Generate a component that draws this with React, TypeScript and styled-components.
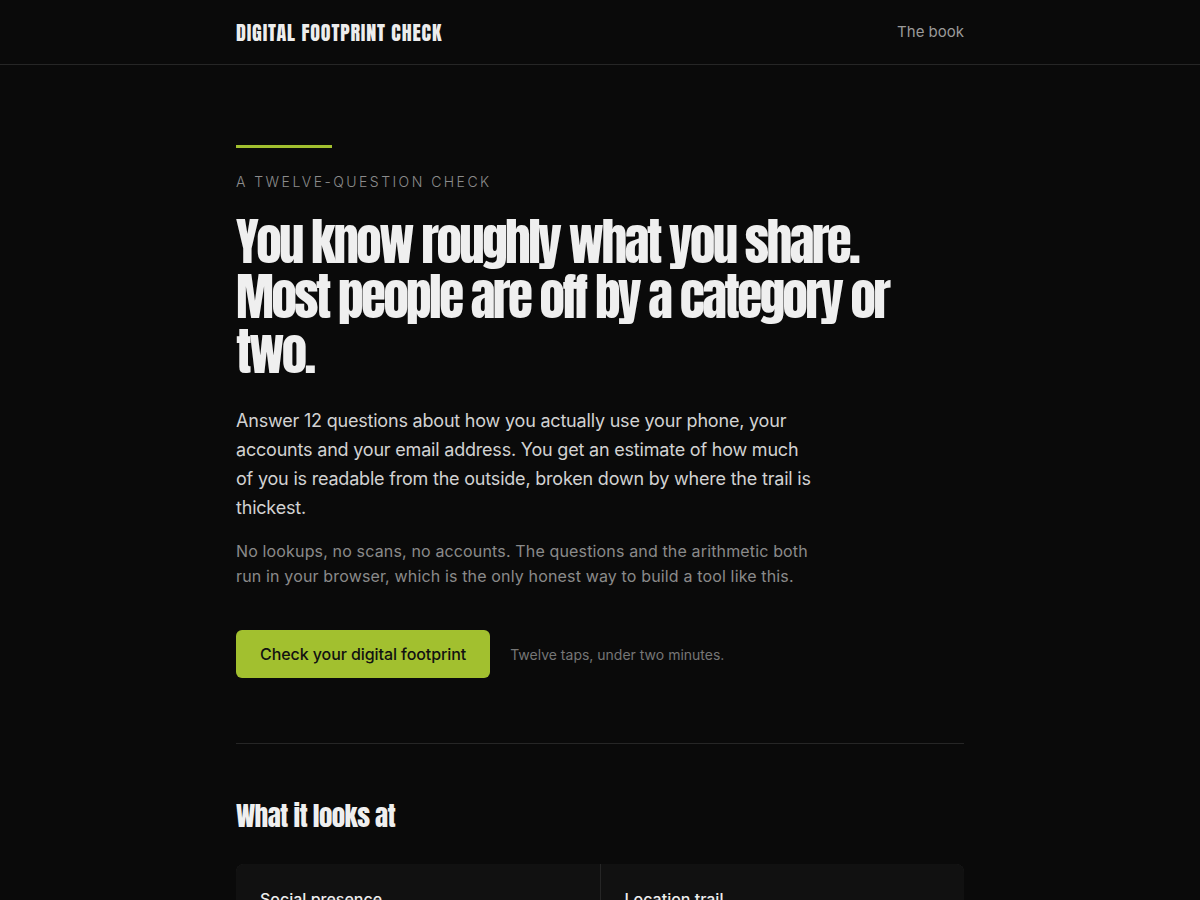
import styled, { createGlobalStyle } from "styled-components";

const GlobalStyle = createGlobalStyle`
  html, body {
    margin: 0;
    padding: 0;
    background: #0a0a0a;
    color: #ededed;
    font-family: Inter, "Noto Sans", sans-serif;
  }
  * { box-sizing: border-box; }
`;

const display = `"Anton", "Liberation Sans Narrow", "DejaVu Sans Condensed", sans-serif`;

const Header = styled.header`
  border-bottom: 1px solid #262626;
`;

const Container = styled.div`
  width: 728px;
  margin: 0 auto;
`;

const HeaderInner = styled(Container)`
  height: 64px;
  display: flex;
  align-items: center;
  justify-content: space-between;
`;

const Logo = styled.div`
  font-family: ${display};
  font-weight: 400;
  font-size: 20px;
  letter-spacing: 0.85px;
  text-transform: uppercase;
  color: #ededed;
`;

const NavLink = styled.a`
  font-size: 15px;
  color: #9a9a9a;
  text-decoration: none;
  margin-top: -1px;
`;

const Hero = styled.section`
  padding-top: 80px;
  padding-bottom: 65px;
  border-bottom: 1px solid #262626;
`;

const Accent = styled.div`
  width: 96px;
  height: 3px;
  background: #a2c02f;
  margin-bottom: 25px;
`;

const Eyebrow = styled.div`
  font-size: 14px;
  font-weight: 300;
  letter-spacing: 0.175em;
  text-transform: uppercase;
  color: #8c8c8c;
  margin-bottom: 24px;
`;

const Title = styled.h1`
  font-family: ${display};
  font-weight: 400;
  font-size: 51px;
  line-height: 55px;
  letter-spacing: -2.6px;
  margin: 0 0 27px;
  max-width: 680px;
  color: #efefef;
`;

const Lead = styled.p<{ $muted?: boolean }>`
  margin: 0;
  max-width: 580px;
  font-size: ${(p) => (p.$muted ? 16 : 18)}px;
  line-height: ${(p) => (p.$muted ? 25 : 29)}px;
  letter-spacing: ${(p) => (p.$muted ? "0.15px" : "-0.2px")};
  color: ${(p) => (p.$muted ? "#8a8a8a" : "#d2d2d2")};
  margin-bottom: ${(p) => (p.$muted ? 41 : 17)}px;
`;

const Actions = styled.div`
  display: flex;
  align-items: center;
  gap: 20px;
`;

const Button = styled.button`
  height: 48px;
  padding: 0 24px;
  border: 0;
  border-radius: 6px;
  background: #a2c02f;
  color: #111;
  font-family: Inter, sans-serif;
  font-size: 16px;
  font-weight: 500;
  letter-spacing: -0.08px;
  cursor: pointer;
`;

const Note = styled.span`
  font-size: 14px;
  color: #767676;
`;

const Section = styled.section`
  padding-top: 55px;
`;

const SectionTitle = styled.h2`
  font-family: ${display};
  font-weight: 400;
  font-size: 27px;
  line-height: 34px;
  letter-spacing: -0.6px;
  margin: 0 0 31px;
  color: #efefef;
`;

const Grid = styled.div`
  display: grid;
  grid-template-columns: 1fr 1fr;
  gap: 1px;
  background: #262626;
  border-radius: 8px;
  overflow: hidden;
`;

const Card = styled.div`
  background: #111111;
  padding: 25px 24px 24px;
  min-height: 160px;
`;

const CardTitle = styled.h3`
  margin: 0 0 8px;
  font-size: 16px;
  font-weight: 500;
  color: #ededed;
`;

const CardText = styled.p`
  margin: 0;
  font-size: 14px;
  line-height: 22px;
  color: #8a8a8a;
`;

const cards = [
  { title: "Social presence", text: "How many platforms carry your real name, face and connections." },
  { title: "Location trail", text: "Which apps know where you are, and how often they check." },
  { title: "Account sprawl", text: "Old sign-ups you forgot, still holding your details." },
  { title: "Email exposure", text: "Where your address has travelled, and who resold it." },
];

export default function App() {
  return (
    <>
      <GlobalStyle />
      <Header>
        <HeaderInner>
          <Logo>Digital Footprint Check</Logo>
          <NavLink href="#">The book</NavLink>
        </HeaderInner>
      </Header>
      <Container>
        <Hero>
          <Accent />
          <Eyebrow>A twelve-question check</Eyebrow>
          <Title>
            You know roughly what you share. Most people are off by a category or two.
          </Title>
          <Lead>
            Answer 12 questions about how you actually use your phone, your accounts and your
            email address. You get an estimate of how much of you is readable from the outside,
            broken down by where the trail is thickest.
          </Lead>
          <Lead $muted>
            No lookups, no scans, no accounts. The questions and the arithmetic both run in your
            browser, which is the only honest way to build a tool like this.
          </Lead>
          <Actions>
            <Button>Check your digital footprint</Button>
            <Note>Twelve taps, under two minutes.</Note>
          </Actions>
        </Hero>
        <Section>
          <SectionTitle>What it looks at</SectionTitle>
          <Grid>
            {cards.map((c) => (
              <Card key={c.title}>
                <CardTitle>{c.title}</CardTitle>
                <CardText>{c.text}</CardText>
              </Card>
            ))}
          </Grid>
        </Section>
      </Container>
    </>
  );
}
